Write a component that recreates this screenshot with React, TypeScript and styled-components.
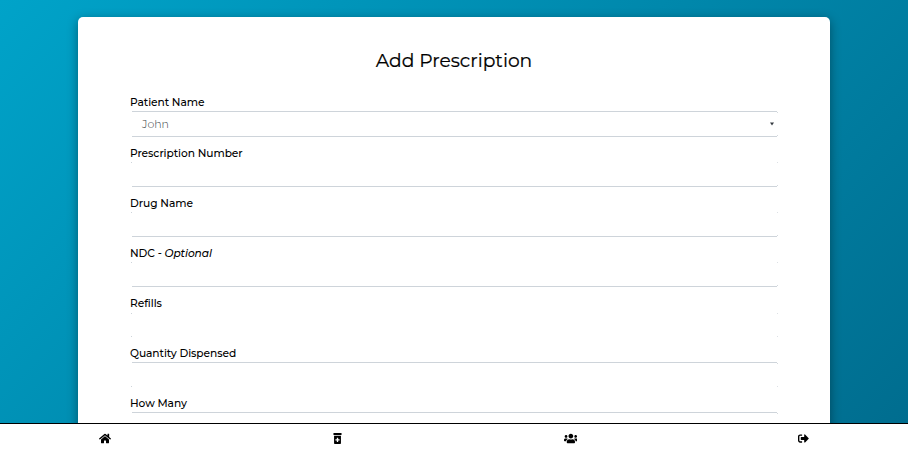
import React from "react";
import styled, { createGlobalStyle } from "styled-components";
import { FaHome, FaPrescriptionBottleAlt, FaUsers, FaSignOutAlt } from "react-icons/fa";

const GlobalStyle = createGlobalStyle`
  *, *::before, *::after { box-sizing: border-box; }
  html, body { margin: 0; height: 100%; overflow: hidden; }
  body { font-family: Montserrat, Inter, sans-serif; color: #000; }
`;

const Screen = styled.div`
  display: flex;
  flex-direction: column;
  height: 100vh;
  overflow: hidden;
`;

const Backdrop = styled.main`
  flex: 1;
  min-height: 0;
  overflow: hidden;
  padding: 17px 78px 0;
  background: linear-gradient(135deg, #00a3c9 0%, #006d8f 100%);
`;

const Card = styled.section`
  height: 600px;
  padding: 31px 52px 0;
  background: #fff;
  border-radius: 5px;
  box-shadow: 0 3px 11px rgba(0, 0, 0, 0.4);
`;

const Title = styled.h1`
  margin: 0 0 22.38px;
  font-size: 18.67px;
  line-height: 26px;
  font-weight: 400;
  text-align: center;
  -webkit-text-stroke: 0.2px #000;
`;

const Field = styled.div`
  height: 50.15px;
`;

const Label = styled.label`
  display: block;
  height: 14.62px;
  font-size: 10.67px;
  line-height: 14px;
  font-weight: 500;
  letter-spacing: -0.06px;
  white-space: nowrap;
`;

const line = (color: string, at: string, width: string) =>
  `linear-gradient(${color}, ${color}) ${at} / ${width} 1px no-repeat`;

/* Hairline control: edge rules stop one pixel short of faint corner marks. */
const Control = styled.div<{ $top: boolean; $bottom: boolean }>`
  display: flex;
  align-items: center;
  justify-content: space-between;
  height: 26px;
  margin-left: 1px;
  padding: 0 4px 0 11px;
  background:
    ${(p) => line(p.$top ? "#ced4da" : "transparent", "50% 0", "calc(100% - 2px)")},
    ${(p) => line(p.$bottom ? "#ced4da" : "transparent", "50% 100%", "calc(100% - 2px)")},
    ${(p) => line(p.$top ? "#d5dade" : "#dde1e5", "100% 1px", "1px")},
    ${(p) => line(p.$bottom ? "#d5dade" : "#dde1e5", "100% calc(100% - 1px)", "1px")},
    ${(p) => line(p.$top ? "transparent" : "#ced4da", "0 1px", "1px")},
    ${(p) => line(p.$bottom ? "transparent" : "#ced4da", "0 calc(100% - 1px)", "1px")};
  color: #343a40;
  font-size: 11px;
  font-weight: 300;
`;

const Arrow = styled.svg`
  width: 4px;
  height: 4px;
  fill: #343a40;
`;

const Nav = styled.nav`
  display: grid;
  grid-template-columns: repeat(4, 233px);
  justify-content: center;
  height: 26px;
  padding-top: 9px;
  border-top: 1px solid #000;
  background: #fff;
`;

const NavItem = styled.a<{ $width: number }>`
  display: flex;
  justify-content: center;
  color: #000;

  svg {
    flex: none;
    width: ${(p) => p.$width}px;
    height: 11px;
  }
`;

type FieldSpec = {
  label: React.ReactNode;
  value?: string;
  top: boolean;
  bottom: boolean;
};

const fields: FieldSpec[] = [
  { label: "Patient Name", value: "John", top: true, bottom: true },
  { label: "Prescription Number", top: false, bottom: true },
  { label: "Drug Name", top: false, bottom: true },
  { label: <>NDC - <em>Optional</em></>, top: false, bottom: true },
  { label: "Refills", top: false, bottom: false },
  { label: "Quantity Dispensed", top: true, bottom: false },
  { label: "How Many", top: true, bottom: true },
];

export default function App() {
  return (
    <>
      <GlobalStyle />
      <Screen>
        <Backdrop>
          <Card>
            <Title>Add Prescription</Title>
            {fields.map((f, i) => (
              <Field key={i}>
                <Label>{f.label}</Label>
                <Control $top={f.top} $bottom={f.bottom}>
                  {f.value}
                  {f.value && (
                    <Arrow viewBox="0 0 5 4">
                      <path d="M0 0h5L2.5 4z" />
                    </Arrow>
                  )}
                </Control>
              </Field>
            ))}
          </Card>
        </Backdrop>
        <Nav>
          <NavItem $width={12}><FaHome /></NavItem>
          <NavItem $width={9}><FaPrescriptionBottleAlt /></NavItem>
          <NavItem $width={13.75}><FaUsers /></NavItem>
          <NavItem $width={11}><FaSignOutAlt /></NavItem>
        </Nav>
      </Screen>
    </>
  );
}
